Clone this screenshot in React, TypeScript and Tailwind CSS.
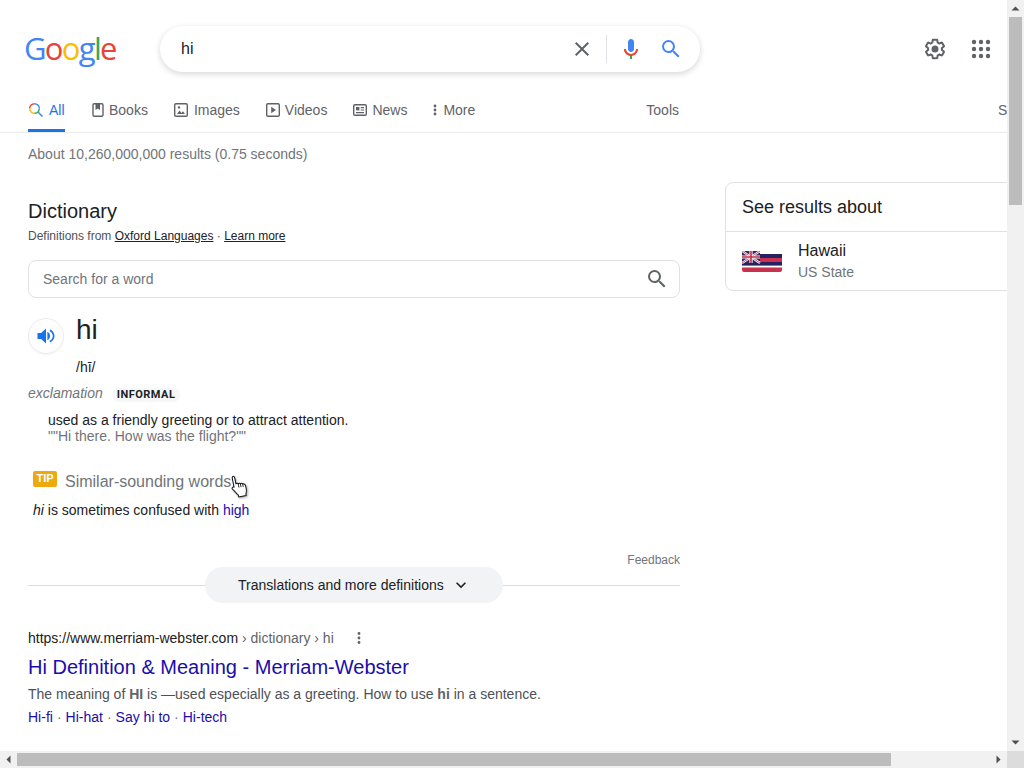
const tabs = [
  { label: "Books", icon: <BookIcon />, gap: "gap-[3px]" },
  { label: "Images", icon: <ImageIcon />, gap: "gap-[5px]" },
  { label: "Videos", icon: <VideoIcon />, gap: "gap-[4px]" },
  { label: "News", icon: <NewsIcon />, gap: "gap-[4px]" },
];

function BookIcon() {
  return (
    <svg width="16" height="16" viewBox="0 0 16 16" fill="none">
      <rect x="3" y="1.7" width="10" height="12.6" rx="1.2" stroke="#5f6368" strokeWidth="1.4" />
      <path d="M5.5 2h4.5v6L7.75 6.6 5.5 8z" fill="#5f6368" />
    </svg>
  );
}

function ImageIcon() {
  return (
    <svg width="16" height="16" viewBox="0 0 16 16" fill="none">
      <rect x="1.7" y="1.7" width="12.6" height="12.6" rx="1.2" stroke="#5f6368" strokeWidth="1.4" />
      <path d="M4 12l2.6-3.4 1.9 2.3 1.5-1.6 2 2.7z" fill="#5f6368" />
      <circle cx="6" cy="5.4" r="1.2" fill="#5f6368" />
    </svg>
  );
}

function VideoIcon() {
  return (
    <svg width="16" height="16" viewBox="0 0 16 16" fill="none">
      <rect x="1.7" y="1.7" width="12.6" height="12.6" rx="1.2" stroke="#5f6368" strokeWidth="1.4" />
      <path d="M6.2 4.8v6.4L11 8z" fill="#5f6368" />
    </svg>
  );
}

function NewsIcon() {
  return (
    <svg width="16" height="16" viewBox="0 0 16 16" fill="none">
      <rect x="1.7" y="2.7" width="12.6" height="10.6" rx="1.2" stroke="#5f6368" strokeWidth="1.4" />
      <rect x="4" y="5" width="3.4" height="3.4" fill="#5f6368" />
      <path d="M8.7 5.600H12M8.700 8H12M4 10.600h8" stroke="#5f6368" strokeWidth="1.2" />
    </svg>
  );
}

function ScrollArrow({ d }: { d: string }) {
  return (
    <div className="flex h-[17px] w-[17px] shrink-0 items-center justify-center">
      <svg width="9" height="9" viewBox="0 0 9 9">
        <path d={d} fill="#505050" />
      </svg>
    </div>
  );
}

function HawaiiFlag() {
  return (
    <svg width="40" height="21" viewBox="0 0 40 21">
      <clipPath id="flag">
        <rect width="40" height="21" rx="2" />
      </clipPath>
      <g clipPath="url(#flag)">
        <rect width="40" height="21" fill="#fff" />
        <rect y="3" width="40" height="4" fill="#262262" />
        <rect y="7" width="40" height="4" fill="#c8324e" />
        <rect y="11" width="40" height="3.600" fill="#262262" />
        <rect y="16.500" width="40" height="4.500" fill="#c8324e" />
        <rect width="18" height="12" fill="#2b2a66" />
        <path d="M0 0l18 12M18 0L0 12" stroke="#fff" strokeWidth="2.200" />
        <path d="M0 0l18 12M18 0L0 12" stroke="#c22a45" strokeWidth="0.800" />
        <path d="M9 0v12M0 6h18" stroke="#fff" strokeWidth="3.200" />
        <path d="M9 0v12M0 6h18" stroke="#c22a45" strokeWidth="1.600" />
      </g>
    </svg>
  );
}

export default function App() {
  return (
    <div className="flex h-[768px] w-[1024px] flex-col overflow-hidden bg-white font-['Liberation_Sans',Arial,sans-serif] text-sm text-[#202124]">
      <div className="flex min-h-0 flex-1">
        <div className="relative w-[1007px] overflow-hidden">
          {/* header */}
          <div className="flex h-[96px] items-start pt-[26px]">
            <div className="ml-[24px] flex h-[46px] w-[136px] items-center pb-[1px] font-['Open_Sans',sans-serif] text-[31px] font-medium leading-none tracking-[-1.7px]">
              <span className="text-[#4285f4]">G</span>
              <span className="text-[#ea4335]">o</span>
              <span className="text-[#fbbc05]">o</span>
              <span className="text-[#4285f4]">g</span>
              <span className="text-[#34a853]">l</span>
              <span className="text-[#ea4335]">e</span>
            </div>
            <div className="flex h-[46px] w-[540px] items-center rounded-[23px] bg-white pl-[21px] shadow-[0_2px_5px_1px_rgba(64,60,67,0.16)]">
              <span className="flex-1 text-base">hi</span>
              <svg width="24" height="24" viewBox="0 0 24 24" fill="#5f6368" className="mr-[12px]">
                <path d="M19 6.41 17.59 5 12 10.59 6.41 5 5 6.41 10.59 12 5 17.59 6.41 19 12 13.41 17.59 19 19 17.59 13.41 12z" />
              </svg>
              <div className="mr-[12px] h-[28px] w-px bg-[#dfe1e5]" />
              <svg width="24" height="24" viewBox="0 0 24 24" className="mr-[16px]">
                <path d="M12 15c1.66 0 3-1.31 3-2.97V5c0-1.66-1.34-3-3-3S9 3.34 9 5v7.03C9 13.69 10.34 15 12 15z" fill="#4285f4" />
                <path d="M11 18.08h2V22h-2z" fill="#34a853" />
                <path d="M7.05 16.87A6.96 6.96 0 0 0 11 18.92V17a5 5 0 0 1-2.5-1.5z" fill="#f4b400" />
                <path d="M5 12.03H7c0 1.4.6 2.6 1.5 3.47l-1.45 1.37A6.9 6.9 0 0 1 5 12.03z" fill="#f4b400" />
                <path d="M12 17c-2.76 0-5-2.22-5-4.97H5c0 3.53 2.61 6.45 6 6.89h2c3.39-.44 6-3.36 6-6.89h-2C17 14.78 14.76 17 12 17z" fill="#ea4335" />
              </svg>
              <svg width="24" height="24" viewBox="0 0 24 24" fill="#4285f4" className="mr-[17px]">
                <path d="M15.5 14h-.79l-.28-.27A6.47 6.47 0 0 0 16 9.5 6.5 6.5 0 1 0 9.5 16c1.61 0 3.09-.59 4.23-1.57l.27.28v.79l5 4.99L20.49 19l-4.99-5zm-6 0C7.01 14 5 11.99 5 9.5S7.01 5 9.5 5 14 7.01 14 9.5 11.99 14 9.5 14z" />
              </svg>
            </div>
            <div className="ml-[223px] mt-[11px] flex items-center gap-[22px]">
              <svg width="24" height="24" viewBox="0 0 24 24" fill="#5f6368">
                <path d="M13.85 22.25h-3.7c-.74 0-1.36-.54-1.45-1.27l-.27-1.89c-.27-.14-.53-.29-.79-.46l-1.8.72c-.7.26-1.47-.03-1.81-.65L2.2 15.53c-.35-.66-.2-1.44.36-1.88l1.53-1.19c-.01-.15-.02-.3-.02-.46 0-.15.01-.31.02-.46l-1.52-1.19c-.59-.45-.74-1.26-.37-1.88l1.85-3.19c.34-.62 1.11-.9 1.79-.63l1.81.73c.26-.17.52-.32.78-.46l.27-1.91c.09-.7.71-1.26 1.44-1.26h3.7c.74 0 1.36.54 1.45 1.27l.27 1.89c.27.14.53.29.79.46l1.8-.72c.71-.26 1.48.03 1.82.65l1.84 3.18c.36.66.2 1.44-.36 1.88l-1.52 1.19c.01.15.02.3.02.46s-.01.31-.02.46l1.52 1.19c.56.45.72 1.23.37 1.86l-1.86 3.22c-.34.62-1.11.9-1.8.63l-1.8-.72c-.26.17-.52.32-.78.46l-.27 1.91c-.1.68-.72 1.22-1.46 1.22zm-3.23-2h2.76l.37-2.55.53-.22c.44-.18.88-.44 1.34-.78l.45-.34 2.38.96 1.38-2.4-2.03-1.58.07-.56c.03-.26.06-.51.06-.78s-.03-.53-.06-.78l-.07-.56 2.03-1.58-1.39-2.4-2.39.96-.45-.35c-.42-.32-.87-.58-1.33-.77l-.52-.22-.37-2.55h-2.76l-.37 2.55-.53.21c-.44.19-.88.44-1.34.79l-.45.33-2.38-.95-1.39 2.39 2.03 1.58-.07.56a7 7 0 0 0-.06.79c0 .26.02.53.06.78l.07.56-2.03 1.58 1.38 2.4 2.39-.96.45.35c.43.33.86.58 1.33.77l.53.22.38 2.55z" />
                <circle cx="12" cy="12" r="3.5" />
              </svg>
              <svg width="24" height="24" viewBox="0 0 24 24" fill="#5f6368">
                <circle cx="5" cy="5" r="2.2" /><circle cx="12" cy="5" r="2.2" /><circle cx="19" cy="5" r="2.2" />
                <circle cx="5" cy="12" r="2.2" /><circle cx="12" cy="12" r="2.2" /><circle cx="19" cy="12" r="2.2" />
                <circle cx="5" cy="19" r="2.2" /><circle cx="12" cy="19" r="2.2" /><circle cx="19" cy="19" r="2.2" />
              </svg>
            </div>
          </div>

          {/* tabs */}
          <div className="flex h-[37px] w-[1100px] border-b border-[#ebebeb] pl-[28px] text-[#5f6368]">
            <div className="flex w-[652px] gap-[25px]">
              <div className="flex h-[36px] w-[37px] items-center gap-[5px] border-b-[3px] border-[#1a73e8] pb-[5px] text-[#1a73e8]">
                <svg width="16" height="16" viewBox="0 0 16 16" fill="none" className="shrink-0">
                  <path d="M10.2 10.2 14.5 14.5" stroke="#4285f4" strokeWidth="1.6" />
                  <path d="M1.7 6.5a4.8 4.8 0 0 1 4.8-4.8" stroke="#ea4335" strokeWidth="1.4" />
                  <path d="M6.5 1.7a4.8 4.8 0 0 1 4.8 4.8" stroke="#4285f4" strokeWidth="1.4" />
                  <path d="M1.7 6.5a4.8 4.8 0 0 0 4.8 4.8" stroke="#fbbc05" strokeWidth="1.4" />
                  <path d="M6.5 11.3a4.8 4.8 0 0 0 4.8-4.8" stroke="#34a853" strokeWidth="1.4" />
                </svg>
                All
              </div>
              {tabs.map((tab) => (
                <div key={tab.label} className={`flex h-[36px] items-center pb-[8px] ${tab.gap}`}>
                  {tab.icon}
                  {tab.label}
                </div>
              ))}
              <div className="flex h-[36px] items-center gap-[5px] pb-[8px]">
                <svg width="6" height="16" viewBox="0 0 6 16" fill="#5f6368">
                  <circle cx="3" cy="4" r="1.4" /><circle cx="3" cy="8" r="1.4" /><circle cx="3" cy="12" r="1.4" />
                </svg>
                More
              </div>
              <div className="ml-auto flex h-[36px] items-center pb-[8px] pr-px">Tools</div>
            </div>
            <div className="ml-[318px] flex h-[36px] items-center pb-[8px]">SafeSearch</div>
          </div>

          <div className="ml-[28px] mt-[12px] leading-[18px] text-[#70757a]">About 10,260,000,000 results (0.75 seconds)</div>

          <div className="flex items-start">
            {/* left column */}
            <div className="ml-[28px] w-[652px] shrink-0">
              <div className="mt-[35px] text-[20px] leading-[26px]">Dictionary</div>
              <div className="mt-[4px] text-xs leading-[16px] text-[#4d5156]">
                Definitions from <span className="text-[#202124] underline">Oxford Languages</span> · <span className="text-[#202124] underline">Learn more</span>
              </div>
              <div className="mt-[16px] flex h-[38px] items-center rounded-lg border border-[#dfe1e5] pl-[14px] pr-[10px] text-[#70757a]">
                <span className="flex-1">Search for a word</span>
                <svg width="24" height="24" viewBox="0 0 24 24" fill="#5f6368">
                  <path d="M15.5 14h-.79l-.28-.27A6.47 6.47 0 0 0 16 9.5 6.5 6.5 0 1 0 9.5 16c1.61 0 3.09-.59 4.23-1.57l.27.28v.79l5 4.99L20.49 19l-4.99-5zm-6 0C7.01 14 5 11.99 5 9.5S7.01 5 9.5 5 14 7.01 14 9.5 11.99 14 9.5 14z" />
                </svg>
              </div>
              <div className="mt-[14px] flex items-start gap-[12px]">
                <div className="mt-[6px] flex h-[36px] w-[36px] items-center justify-center rounded-full border border-[#ebebeb] shadow-[0_1px_2px_rgba(0,0,0,0.05)]">
                  <svg width="20" height="20" viewBox="0 0 20 20" fill="#1a73e8">
                    <path d="M1.5 7v6h3.6l4.9 4.6V2.4L5.1 7z" />
                    <path d="M11.4 5.800c1.600.7 2.600 2.400 2.600 4.200s-1 3.500-2.600 4.200z" />
                    <path d="M14.300 3.600c2.400 1.200 4.200 3.600 4.200 6.400s-1.800 5.200-4.200 6.400l-.8-1.400c1.900-1 3.300-2.800 3.300-5s-1.400-4-3.300-5z" />
                  </svg>
                </div>
                <div>
                  <div className="text-[28px] leading-[36px]">hi</div>
                  <div className="mt-[10px] leading-[18px]">/hī/</div>
                </div>
              </div>
              <div className="mt-[8px] flex items-center">
                <span className="italic leading-[18px] text-[#70757a]">exclamation</span>
                <span className="ml-[9px] mt-[4px] rounded-[7px] bg-[#f6f7f8] px-[5px] font-['Roboto',sans-serif] text-[11px] font-bold leading-[14px] tracking-[0.5px]">INFORMAL</span>
              </div>
              <div className="ml-[20px] mt-[10px] leading-[16px]">used as a friendly greeting or to attract attention.</div>
              <div className="ml-[20px] leading-[16px] text-[#70757a]">""Hi there. How was the flight?""</div>
              <div className="ml-[5px] mt-[29px] flex h-[18px] items-center gap-[8px]">
                <span className="mb-[6px] flex h-[16px] w-[24px] items-center justify-center rounded-[2px] bg-[#eea90f] text-[11px] font-bold text-white">TIP</span>
                <span className="text-base text-[#70757a]">Similar-sounding words</span>
              </div>
              <div className="ml-[5px] mt-[10px] leading-[18px]">
                <i>hi</i> is sometimes confused with <span className="text-[#1a0dab]">high</span>
              </div>
              <div className="mt-[33px] text-right text-xs leading-[16px] text-[#70757a]">Feedback</div>
              <div className="mt-[-1px] flex items-center">
                <div className="h-px flex-1 bg-[#dadce0]" />
                <div className="flex h-[36px] w-[298px] items-center rounded-[18px] bg-[#f1f3f4] pl-[33px]">
                  Translations and more definitions
                  <svg width="20" height="20" viewBox="0 0 24 24" fill="#202124" className="ml-[7px]">
                    <path d="M16.59 8.59 12 13.17 7.41 8.59 6 10l6 6 6-6z" />
                  </svg>
                </div>
                <div className="h-px flex-1 bg-[#dadce0]" />
              </div>
              <div className="mt-[26px] flex h-[18px] items-center">
                <span>https://www.merriam-webster.com</span>
                <span className="text-[#5f6368]">&nbsp;› dictionary › hi</span>
                <svg width="4" height="14" viewBox="0 0 4 14" fill="#5f6368" className="ml-[23px]">
                  <circle cx="2" cy="2.5" r="1.4" /><circle cx="2" cy="7" r="1.4" /><circle cx="2" cy="11.5" r="1.4" />
                </svg>
              </div>
              <div className="mt-[7px] text-[20px] leading-[26px] text-[#1a0dab]">Hi Definition &amp; Meaning - Merriam-Webster</div>
              <div className="mt-[3px] leading-[22px] text-[#4d5156]">
                The meaning of <b className="text-[#5f6368]">HI</b> is —used especially as a greeting. How to use <b className="text-[#5f6368]">hi</b> in a sentence.
              </div>
              <div className="mt-[1px] flex gap-[4px] leading-[22px] text-[#70757a]">
                <span className="text-[#1a0dab]">Hi-fi</span>·
                <span className="text-[#1a0dab]">Hi-hat</span>·
                <span className="text-[#1a0dab]">Say hi to</span>·
                <span className="text-[#1a0dab]">Hi-tech</span>
              </div>
            </div>

            {/* knowledge panel */}
            <div className="ml-[45px] mt-[19px] w-[340px] shrink-0 rounded-lg border border-[#dfe1e5]">
              <div className="flex h-[49px] items-center border-b border-[#dfe1e5] pl-[16px] text-lg">See results about</div>
              <div className="flex h-[58px] items-center pl-[16px]">
                <div className="flex h-[40px] w-[40px] items-center justify-center">
                  <HawaiiFlag />
                </div>
                <div className="ml-[16px]">
                  <div className="text-base leading-[20px]">Hawaii</div>
                  <div className="mt-[1px] leading-[20px] text-[#70757a]">US State</div>
                </div>
              </div>
            </div>
          </div>

          {/* mouse pointer */}
          <svg width="20" height="26" viewBox="0 0 20 26" className="absolute left-[230px] top-[473px] drop-shadow-[1px_1px_1px_rgba(0,0,0,0.35)]">
            <g transform="rotate(-12 10 13)">
              <path d="M4.500 2.500c.9-.7 2-.2 2 1V10c.8-.5 1.800-.4 2.200.3.8-.4 1.800-.2 2.100.5.9-.3 1.800 0 2.100.8.5-.2 2.600 0 2.600 2.400v3.500c0 2-.6 3-1.400 4.500v1.500H6.500v-2C5 19.500 3.600 16.500 2 14.500c-.8-1.200.4-2.600 2-1.600V3.500z" fill="#fff" stroke="#111" strokeWidth="1" strokeLinejoin="round" />
              <path d="M8.700 10.300v4M10.800 10.800v3.500M13 11.600v3" stroke="#111" strokeWidth="0.8" fill="none" />
            </g>
          </svg>
        </div>

        {/* vertical scrollbar */}
        <div className="flex w-[17px] flex-col bg-[#f1f1f1]">
          <ScrollArrow d="M4.500 2.500 8.500 6.500H.5z" />
          <div className="ml-[2px] h-[188px] w-[13px] bg-[#bcbcbc]" />
          <div className="flex-1" />
          <ScrollArrow d="M.5 2.500h8L4.500 6.500z" />
        </div>
      </div>

      {/* horizontal scrollbar */}
      <div className="flex h-[17px] shrink-0 bg-[#f1f1f1]">
        <ScrollArrow d="M6.500.5v8L2.500 4.500z" />
        <div className="mt-[2px] h-[13px] w-[874px] bg-[#bcbcbc]" />
        <div className="flex-1" />
        <ScrollArrow d="M2.500.5v8l4-4z" />
        <div className="w-[17px] bg-[#dcdcdc]" />
      </div>
    </div>
  );
}
